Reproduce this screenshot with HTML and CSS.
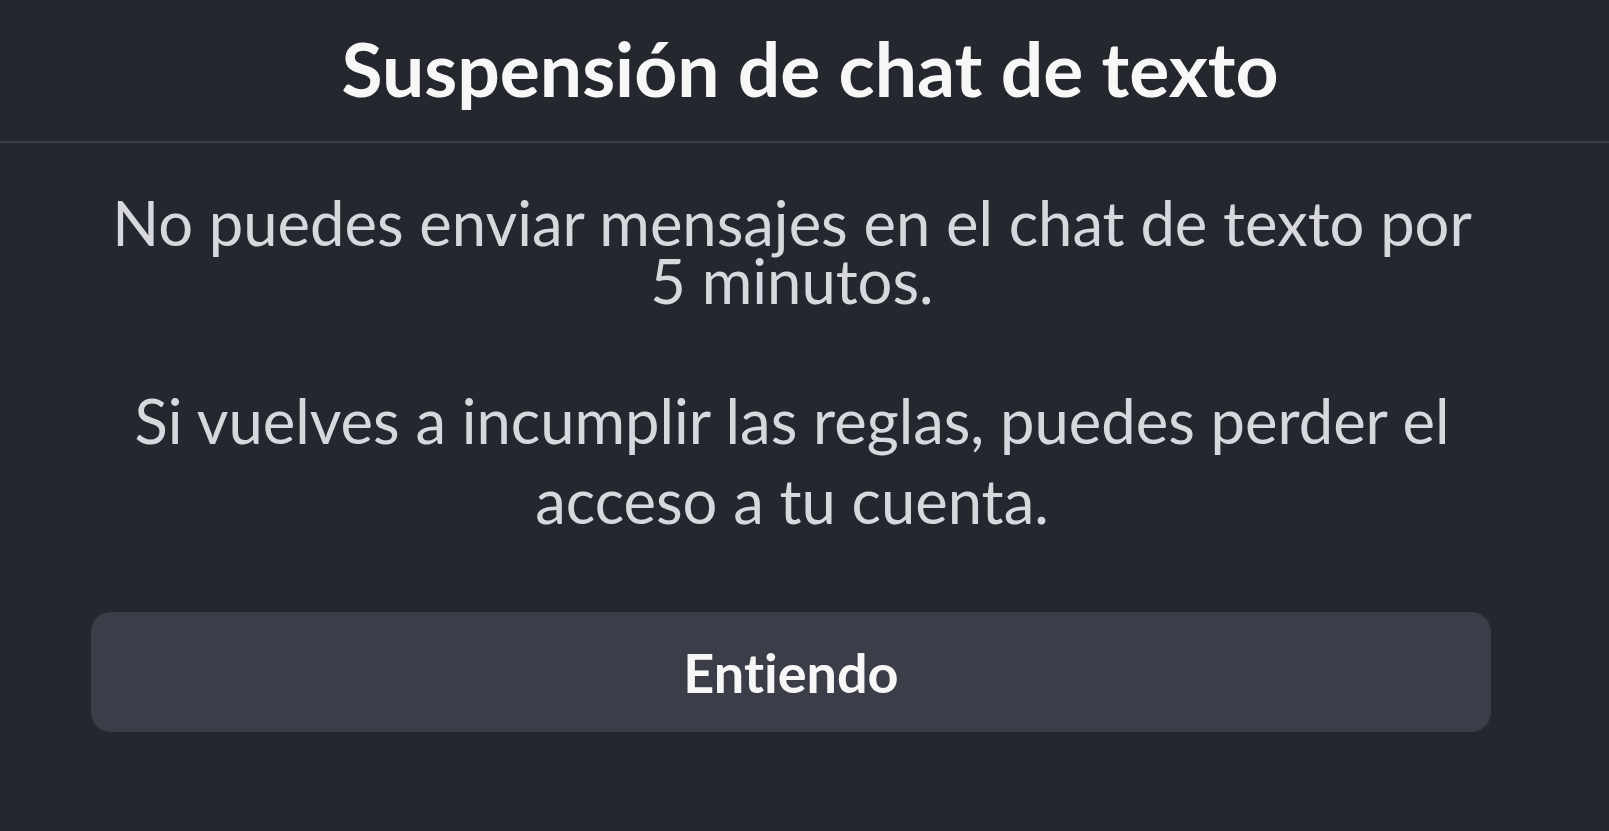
FILE: index.html
```html
<!DOCTYPE html>
<html lang="es">
  <head>
    <meta charset="UTF-8" />
    <title>Suspensión de chat de texto</title>
    <link rel="stylesheet" href="styles.css">
  </head>
  <body>
    <div class="modal">
      <header class="modal-header">
        <h1 class="titulo">Suspensión de chat de texto</h1>
      </header>

      <div class="modal-body">
        <p class="aviso">No puedes enviar mensajes en el chat de texto por 5 minutos.</p>
        <p class="advertencia">Si vuelves a incumplir las reglas, puedes perder el acceso a tu cuenta.</p>
      </div>

      <div class="modal-footer">
        <button class="btn-entiendo">Entiendo</button>
      </div>
    </div>
  </body>
</html>
```

FILE: styles.css
```css
html,
body {
  margin: 0;
  height: 100%;
  background: #25272f;
}
body {
  font-family: Lato, "Liberation Sans", sans-serif;
  font-variant-ligatures: none;
  color: #d6d8de;
}
.modal {
  display: flex;
  flex-direction: column;
  height: 100%;
}
.modal-header {
  height: 143px;
  display: flex;
  align-items: center;
  justify-content: center;
  padding-left: 11px;
  border-bottom: 2px solid #3c3e48;
  box-sizing: border-box;
}
.titulo {
  margin: 0;
  font-size: 75px;
  font-weight: 700;
  color: #f7f7f8;
  padding-bottom: 6px;
}
.modal-body {
  padding: 50px 130px 0 105px;
  text-align: center;
}
.aviso {
  margin: 0;
  font-size: 61.5px;
  line-height: 58px;
}
.advertencia {
  margin: 71px 0 0;
  font-size: 61.5px;
  line-height: 80px;
}
.modal-footer {
  padding: 0 118px 0 91px;
  margin-top: 72px;
}
.btn-entiendo {
  display: block;
  width: 100%;
  height: 120px;
  border: none;
  border-radius: 20px;
  background: #3b3d49;
  color: #f7f7f8;
  font-family: Lato, "Liberation Sans", sans-serif;
  font-variant-ligatures: none;
  font-size: 54px;
  font-weight: 700;
  cursor: pointer;
}
```
